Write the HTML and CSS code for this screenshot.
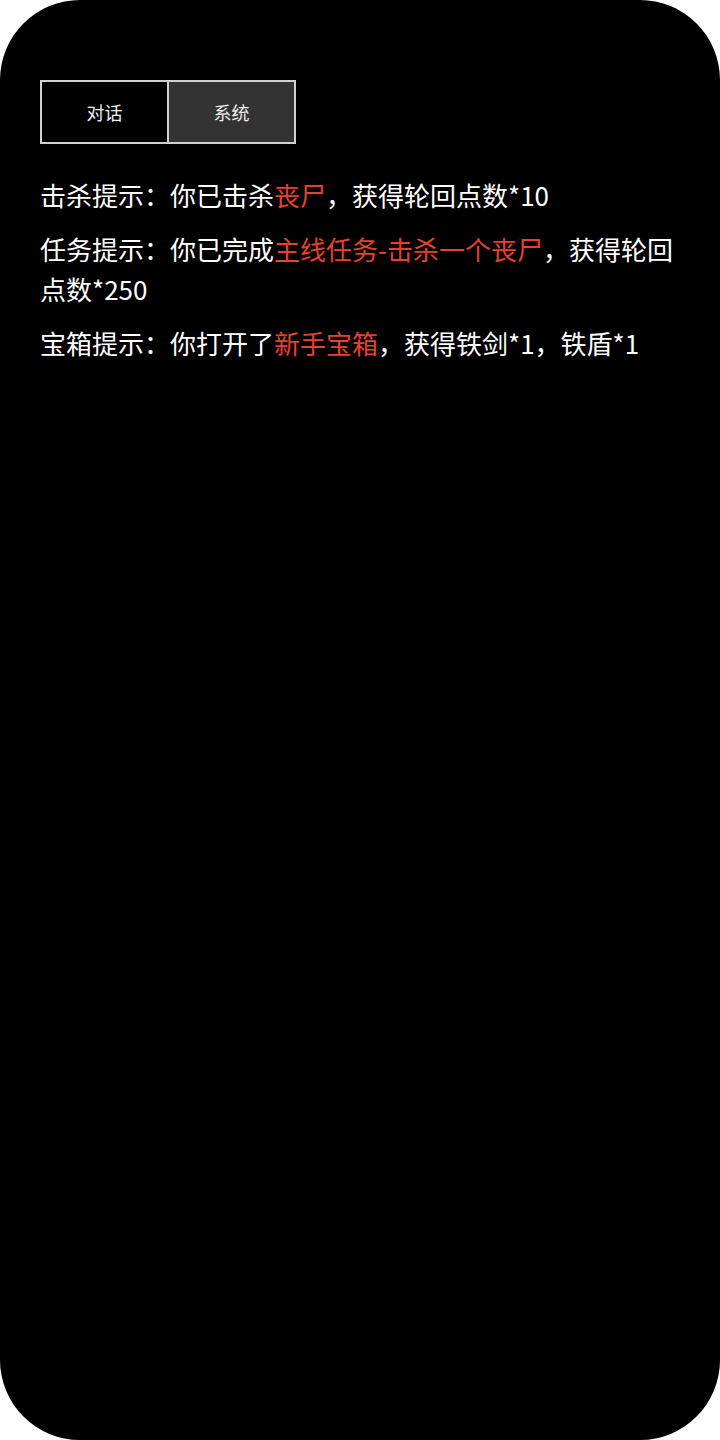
FILE: index.html
```html
<!DOCTYPE html>
<html lang="zh">
<head>
<meta charset="utf-8">
<link rel="stylesheet" href="styles.css">
</head>
<body>
<div class="phone">
  <div class="tabs">
    <div class="tab">对话</div>
    <div class="tab active">系统</div>
  </div>
  <div class="messages">
    <p class="msg">击杀提示：你已击杀<span class="hl">丧尸</span>，获得轮回点数*10</p>
    <p class="msg">任务提示：你已完成<span class="hl">主线任务-击杀一个丧尸</span>，获得轮回点数*250</p>
    <p class="msg">宝箱提示：你打开了<span class="hl">新手宝箱</span>，获得铁剑*1，铁盾*1</p>
  </div>
</div>
</body>
</html>
```
FILE: styles.css
```css
html, body {
  margin: 0;
  padding: 0;
  background: #ffffff;
}
.phone {
  width: 720px;
  height: 1440px;
  background: #000000;
  border-radius: 80px;
  box-sizing: border-box;
  padding: 80px 40px 0 40px;
  font-family: "Noto Sans CJK SC", "Noto Sans", sans-serif;
  color: #ffffff;
}
.tabs {
  display: flex;
  width: 256px;
  height: 64px;
  border: 2px solid #d0d0d0;
  box-sizing: border-box;
}
.tab {
  flex: 1;
  display: flex;
  align-items: center;
  justify-content: center;
  font-size: 18px;
  color: #f0f0f0;
  background: #000000;
}
.tab + .tab {
  border-left: 2px solid #d0d0d0;
}
.tab.active {
  background: #333333;
}
.messages {
  margin-top: 31px;
  display: flex;
  flex-direction: column;
  gap: 14px;
}
.msg {
  margin: 0;
  font-size: 26px;
  line-height: 40px;
  color: #ffffff;
}
.hl {
  color: #e8402f;
}
```
